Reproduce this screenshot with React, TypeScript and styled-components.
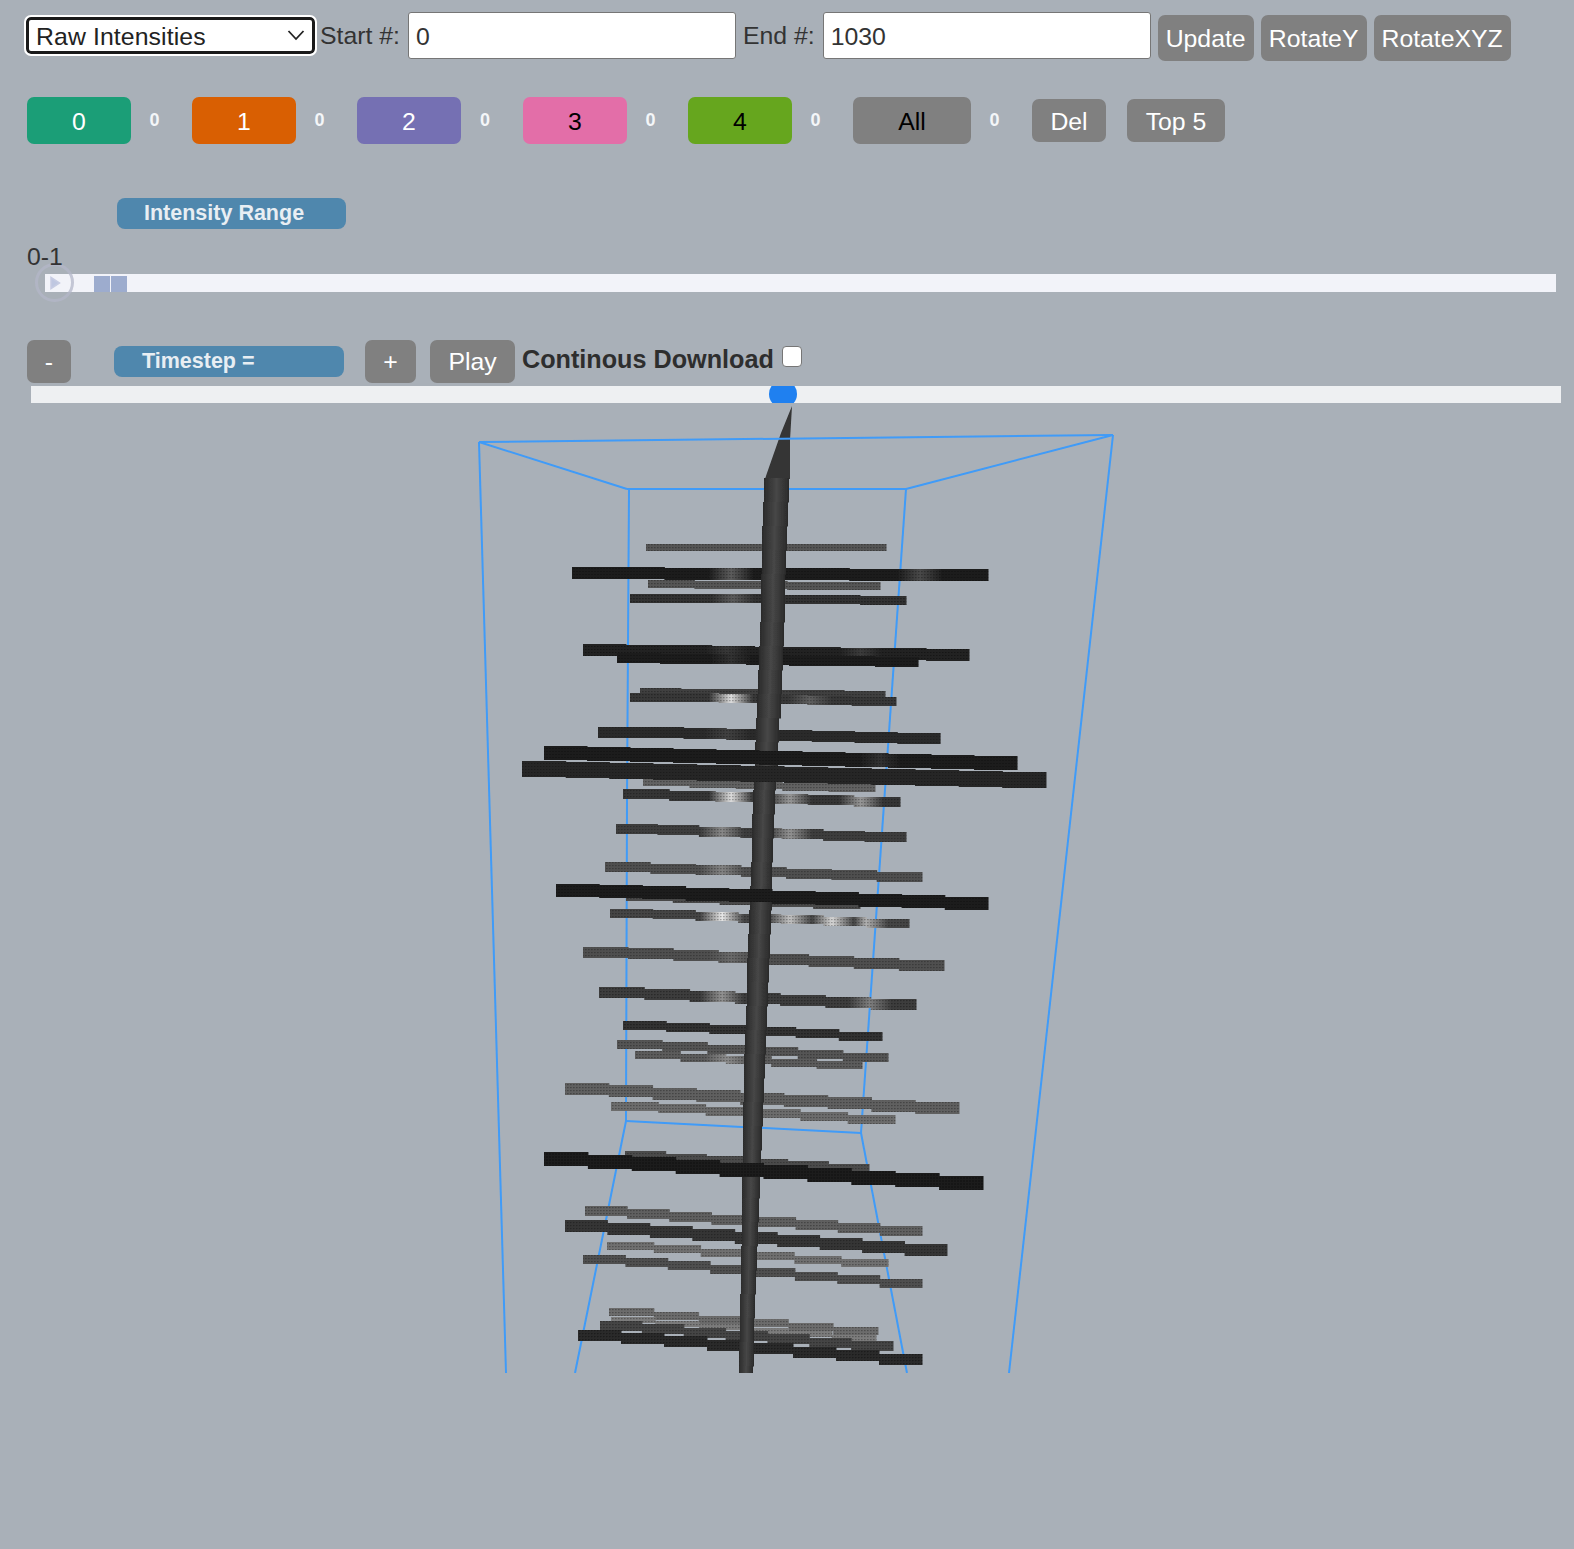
import styled, { createGlobalStyle } from "styled-components";

const GlobalStyle = createGlobalStyle`
  html, body {
    margin: 0;
    padding: 0;
    background: #a9b0b8;
  }
  body {
    font-family: "Liberation Sans", Arial, sans-serif;
    font-size: 24.8px;
    color: #333;
  }
`;

const Page = styled.div`
  width: 1574px;
  height: 1549px;
  overflow: hidden;
  background: #a9b0b8;
`;

const TopRow = styled.div`
  display: flex;
  align-items: flex-start;
  height: 47px;
  padding: 12px 0 0 26px;
`;

const SelectBox = styled.div`
  position: relative;
  width: 289px;
  height: 37px;
  margin-top: 5px;
  flex: none;
`;

const ModeSelect = styled.select`
  display: block;
  width: 100%;
  height: 100%;
  padding: 2px 0 0 7px;
  box-sizing: border-box;
  appearance: none;
  font: 24.8px "Liberation Sans", Arial, sans-serif;
  letter-spacing: 0.1px;
  color: #222;
  background: #fff;
  border: 3px solid #1a1a1a;
  border-radius: 5px;
  outline: 2px solid #fff;
  outline-offset: 0;
`;

const SelectArrow = styled.svg`
  position: absolute;
  right: 10px;
  top: 12px;
  pointer-events: none;
`;

const FieldLabel = styled.label<{ $left: number }>`
  margin-left: ${(p) => p.$left}px;
  line-height: 47px;
  height: 47px;
`;

const NumberInput = styled.input`
  width: 328px;
  height: 47px;
  box-sizing: border-box;
  margin-left: 8px;
  padding: 2px 7px 0;
  font: 24.8px "Liberation Sans", Arial, sans-serif;
  color: #333;
  background: #fff;
  border: 1px solid #767676;
  border-radius: 3px;
`;

const GreyButton = styled.button<{ $w: number; $h: number; $left?: number }>`
  width: ${(p) => p.$w}px;
  height: ${(p) => p.$h}px;
  margin-left: ${(p) => p.$left ?? 0}px;
  padding: 2px 0 0;
  flex: none;
  font: 24.8px "Liberation Sans", Arial, sans-serif;
  color: #fff;
  background: #808080;
  border: none;
  border-radius: 7px;
`;

const TopButton = styled(GreyButton)`
  margin-top: 3px;
`;

const TimeButton = styled(GreyButton)`
  padding-top: 0;
`;

const ClusterRow = styled.div`
  display: flex;
  align-items: center;
  height: 47px;
  margin-top: 38px;
  padding-left: 27px;
`;

const ClusterButton = styled.button<{ $bg: string; $fg: string; $w?: number }>`
  width: ${(p) => p.$w ?? 104}px;
  height: 47px;
  flex: none;
  padding: 2px 0 0;
  font: 24.8px "Liberation Sans", Arial, sans-serif;
  color: ${(p) => p.$fg};
  background: ${(p) => p.$bg};
  border: none;
  border-radius: 7px;
`;

const ClusterCount = styled.span<{ $w?: number }>`
  width: ${(p) => p.$w ?? 61}px;
  flex: none;
  padding-right: 14px;
  box-sizing: border-box;
  text-align: center;
  font-size: 18px;
  font-weight: 700;
  color: #f4f6f8;
`;

const Pill = styled.div<{ $left: number; $w: number; $pad: number }>`
  width: ${(p) => p.$w}px;
  height: 31px;
  margin-left: ${(p) => p.$left}px;
  padding-left: ${(p) => p.$pad}px;
  box-sizing: border-box;
  flex: none;
  line-height: 30px;
  font-size: 21.5px;
  font-weight: 700;
  color: #e8eef3;
  background: #4f87ad;
  border-radius: 8px;
`;

const RangeTitle = styled(Pill)`
  margin-top: 54px;
`;

const RangeLabel = styled.div`
  position: relative;
  z-index: 1;
  height: 30px;
  margin: 15px 0 0 27px;
  line-height: 25px;
`;

const RangeTrack = styled.div`
  position: relative;
  width: 1511px;
  height: 18px;
  margin-left: 45px;
  background: #f2f3f9;
`;

const RangeHandle = styled.div`
  position: absolute;
  left: -10px;
  top: -11px;
  width: 39px;
  height: 39px;
  box-sizing: border-box;
  display: flex;
  align-items: center;
  justify-content: center;
  border: 3px solid #b4b7c9;
  border-radius: 50%;
  opacity: 0.75;
`;

const RangeBlock = styled.div<{ $left: number }>`
  position: absolute;
  left: ${(p) => p.$left}px;
  top: 2px;
  width: 16px;
  height: 16px;
  background: #9dacce;
`;

const TimeRow = styled.div`
  display: flex;
  align-items: flex-start;
  height: 43px;
  margin-top: 48px;
  padding-left: 27px;
`;

const TimePill = styled(Pill)`
  margin-top: 6px;
`;

const TimeText = styled.span`
  margin-left: 7px;
  line-height: 38px;
  font-size: 25.2px;
  font-weight: 700;
  color: #2e2e2e;
`;

const TimeCheck = styled.input`
  width: 20px;
  height: 21px;
  margin: 6px 0 0 8px;
  appearance: none;
  box-sizing: border-box;
  background: #fff;
  border: 1.5px solid #767676;
  border-radius: 4px;
`;

const TimeTrack = styled.div`
  position: relative;
  overflow: hidden;
  width: 1530px;
  height: 17px;
  margin: 3px 0 0 31px;
  background: #eef0f2;
`;

const TimeThumb = styled.div`
  position: absolute;
  left: 738px;
  top: -6px;
  width: 28px;
  height: 28px;
  background: #1f80f0;
  border-radius: 50%;
`;

const VolumeView = styled.svg`
  display: block;
  width: 1574px;
  height: 970px;
`;

type Bar = {
  x1: number;
  y1: number;
  x2: number;
  y2: number;
  t: number;
  shade: number;
  over?: boolean;
  glow?: [number, number][];
};

const bars: Bar[] = [
  { x1: 646, y1: 547, x2: 886, y2: 547, t: 5, shade: 84 },
  { x1: 572, y1: 573, x2: 988, y2: 575, t: 10, shade: 30, glow: [[731, 0.28], [920, 0.2]] },
  { x1: 648, y1: 584, x2: 880, y2: 586, t: 6, shade: 86 },
  { x1: 630, y1: 598, x2: 906, y2: 600, t: 7, shade: 48, glow: [[733, 0.22]] },
  { x1: 583, y1: 650, x2: 969, y2: 655, t: 10, shade: 34, glow: [[727, 0.1], [861, 0.12]] },
  { x1: 617, y1: 658, x2: 918, y2: 662, t: 8, shade: 28, glow: [[731, 0.1]] },
  { x1: 640, y1: 692, x2: 885, y2: 695, t: 6, shade: 64 },
  { x1: 630, y1: 697, x2: 896, y2: 701, t: 7, shade: 56, glow: [[731, 0.85], [810, 0.2]] },
  { x1: 598, y1: 732, x2: 940, y2: 738, t: 9, shade: 44, glow: [[727, 0.1]] },
  { x1: 544, y1: 753, x2: 1017, y2: 763, t: 12, shade: 28, over: true, glow: [[880, 0.1]] },
  { x1: 522, y1: 769, x2: 1046, y2: 780, t: 14, shade: 40, over: true },
  { x1: 643, y1: 782, x2: 875, y2: 788, t: 6, shade: 98 },
  { x1: 623, y1: 794, x2: 900, y2: 802, t: 8, shade: 54, glow: [[731, 0.85], [790, 0.5], [861, 0.5]] },
  { x1: 616, y1: 829, x2: 906, y2: 837, t: 8, shade: 62, glow: [[722, 0.4], [790, 0.45]] },
  { x1: 605, y1: 867, x2: 922, y2: 877, t: 8, shade: 80, glow: [[722, 0.3]] },
  { x1: 626, y1: 897, x2: 860, y2: 905, t: 5, shade: 74 },
  { x1: 556, y1: 890, x2: 988, y2: 903, t: 11, shade: 28, over: true },
  { x1: 610, y1: 913, x2: 909, y2: 923, t: 7, shade: 68, glow: [[722, 0.9], [790, 0.7], [832, 0.8], [866, 0.6]] },
  { x1: 583, y1: 952, x2: 944, y2: 965, t: 9, shade: 80, glow: [[731, 0.15]] },
  { x1: 599, y1: 992, x2: 916, y2: 1004, t: 9, shade: 60, glow: [[722, 0.45], [870, 0.35]] },
  { x1: 623, y1: 1025, x2: 882, y2: 1036, t: 7, shade: 48 },
  { x1: 617, y1: 1044, x2: 888, y2: 1057, t: 7, shade: 84 },
  { x1: 635, y1: 1055, x2: 862, y2: 1065, t: 6, shade: 92, glow: [[727, 0.3]] },
  { x1: 565, y1: 1089, x2: 959, y2: 1108, t: 10, shade: 96 },
  { x1: 611, y1: 1106, x2: 895, y2: 1119, t: 7, shade: 108 },
  { x1: 625, y1: 1155, x2: 869, y2: 1168, t: 6, shade: 76 },
  { x1: 544, y1: 1159, x2: 983, y2: 1183, t: 12, shade: 26, over: true },
  { x1: 585, y1: 1211, x2: 922, y2: 1231, t: 8, shade: 96 },
  { x1: 565, y1: 1226, x2: 947, y2: 1250, t: 10, shade: 54 },
  { x1: 607, y1: 1246, x2: 888, y2: 1263, t: 6, shade: 112 },
  { x1: 583, y1: 1259, x2: 922, y2: 1283, t: 7, shade: 80 },
  { x1: 609, y1: 1312, x2: 878, y2: 1331, t: 6, shade: 108 },
  { x1: 611, y1: 1320, x2: 876, y2: 1338, t: 4, shade: 124 },
  { x1: 600, y1: 1326, x2: 893, y2: 1346, t: 8, shade: 68 },
  { x1: 578, y1: 1335, x2: 922, y2: 1359, t: 9, shade: 42 },
];

const boxLines = [
  "M479 442 L506 1373",
  "M1113 435 L1009 1373",
  "M629 489 L627 800 L626 1121",
  "M906 489 L861 1133",
  "M626 1121 L575 1373",
  "M861 1133 L907 1373",
  "M479 442 L627 489",
  "M1113 435 L906 489",
  "M627 489 L906 489",
  "M626 1121 L861 1133",
];

// spine edges as [y, left, right], read off the reference
const spineEdges = [
  [478, 765, 790],
  [500, 763, 788],
  [600, 761, 785],
  [700, 757, 781],
  [780, 754, 776],
  [1070, 744, 765],
  [1193, 742, 760],
  [1277, 741, 756],
  [1373, 739, 753],
];

const spineAt = (y: number) => {
  let i = 0;
  while (i < spineEdges.length - 2 && spineEdges[i + 1][0] < y) i++;
  const [y0, l0, r0] = spineEdges[i];
  const [y1, l1, r1] = spineEdges[i + 1];
  const k = (y - y0) / (y1 - y0);
  return [l0 + (l1 - l0) * k, r0 + (r1 - r0) * k];
};

// cut into short slices so each one carries the full dark-light-dark shading
const spineSlices = () => {
  const out: { y: number; l: number; r: number }[] = [];
  for (let y = 478; y < 1373; y += 24) {
    const [l, r] = spineAt(y + 12);
    out.push({ y, l: Math.round(l), r: Math.round(r) });
  }
  return out;
};

// a bar is drawn as short level pieces, so that it climbs in steps like the voxels do
const stairs = (b: Bar) => {
  const count = Math.max(2, Math.round((b.x2 - b.x1) / 44));
  const w = (b.x2 - b.x1) / count;
  const t = b.t + 2;
  let d = "";
  for (let i = 0; i < count; i++) {
    const y = Math.round(b.y1 + ((b.y2 - b.y1) * i) / (count - 1) - t / 2);
    d += `M${(b.x1 + i * w).toFixed(1)} ${y}h${(w + 0.5).toFixed(1)}v${t}h${-(w + 0.5).toFixed(1)}z`;
  }
  return d;
};

const grey = (v: number) => `rgb(${v},${v},${v})`;

const BarShape = ({ bar, id }: { bar: Bar; id: string }) => {
  const d = stairs(bar);
  return (
    <g>
      <path d={d} fill={bar.glow ? `url(#${id})` : grey(bar.shade)} />
      <path d={d} fill="url(#voxels)" />
    </g>
  );
};

const BarGradient = ({ bar, id }: { bar: Bar; id: string }) => {
  const span = bar.x2 - bar.x1;
  const at = (x: number) => Math.min(1, Math.max(0, (x - bar.x1) / span));
  return (
    <linearGradient id={id} gradientUnits="userSpaceOnUse" x1={bar.x1} y1="0" x2={bar.x2} y2="0">
      {(bar.glow ?? []).map(([x, s]) => {
        const peak = Math.round(bar.shade + (250 - bar.shade) * s);
        return [
          <stop key={`${x}a`} offset={at(x - 22)} stopColor={grey(bar.shade)} />,
          <stop key={`${x}b`} offset={at(x)} stopColor={grey(peak)} />,
          <stop key={`${x}c`} offset={at(x + 22)} stopColor={grey(bar.shade)} />,
        ];
      })}
    </linearGradient>
  );
};

const Volume = () => (
  <VolumeView viewBox="0 403 1574 970">
    <defs>
      <pattern id="voxels" width="3" height="3" patternUnits="userSpaceOnUse">
        <rect x="0" y="1" width="1.6" height="1.2" fill="#000" opacity="0.28" />
      </pattern>
      <linearGradient id="spineShade" x1="0" y1="0" x2="1" y2="0">
        <stop offset="0" stopColor="#2b2b2b" />
        <stop offset="0.5" stopColor="#474747" />
        <stop offset="1" stopColor="#2a2a2a" />
      </linearGradient>
      <filter id="soft" x="-5%" y="-5%" width="110%" height="110%">
        <feGaussianBlur stdDeviation="0.45" />
      </filter>
      {bars.map((b, i) => (b.glow ? <BarGradient key={i} bar={b} id={`bar${i}`} /> : null))}
    </defs>
    <g filter="url(#soft)">
      <g fill="none" stroke="#3f9bf8" strokeWidth="2">
        {boxLines.map((d) => (
          <path key={d} d={d} />
        ))}
      </g>
      {bars.map((b, i) => (!b.over ? <BarShape key={i} bar={b} id={`bar${i}`} /> : null))}
      <path d="M792 406 L790 440 L790 479 L765 479 L767 473 L781 433 Z" fill="#343434" />
      {spineSlices().map((s) => (
        <rect key={s.y} x={s.l} y={s.y} width={s.r - s.l} height={24.5} fill="url(#spineShade)" />
      ))}
      <path d="M479 442 L1113 435" fill="none" stroke="#3f9bf8" strokeWidth="2" />
      {bars.map((b, i) => (b.over ? <BarShape key={i} bar={b} id={`bar${i}`} /> : null))}
    </g>
  </VolumeView>
);

const clusters = [
  { name: "0", bg: "#1b9e77", fg: "#fff", gap: 61 },
  { name: "1", bg: "#d95f02", fg: "#fff", gap: 61 },
  { name: "2", bg: "#7570b3", fg: "#fff", gap: 62 },
  { name: "3", bg: "#e36ea8", fg: "#000", gap: 61 },
  { name: "4", bg: "#66a61e", fg: "#000", gap: 61 },
];

const App = () => (
  <Page>
    <GlobalStyle />
    <TopRow>
      <SelectBox>
        <ModeSelect defaultValue="raw">
          <option value="raw">Raw Intensities</option>
        </ModeSelect>
        <SelectArrow width="18" height="12" viewBox="0 0 18 12">
          <path d="M1.5 2 L9 10 L16.5 2" fill="none" stroke="#222" strokeWidth="1.8" />
        </SelectArrow>
      </SelectBox>
      <FieldLabel $left={5}>Start #:</FieldLabel>
      <NumberInput defaultValue="0" />
      <FieldLabel $left={7}>End #:</FieldLabel>
      <NumberInput defaultValue="1030" />
      <TopButton $w={96} $h={46} $left={7}>Update</TopButton>
      <TopButton $w={106} $h={46} $left={7}>RotateY</TopButton>
      <TopButton $w={137} $h={46} $left={7}>RotateXYZ</TopButton>
    </TopRow>

    <ClusterRow>
      {clusters.map((c) => [
        <ClusterButton key={c.name} $bg={c.bg} $fg={c.fg}>{c.name}</ClusterButton>,
        <ClusterCount key={`${c.name}n`} $w={c.gap}>0</ClusterCount>,
      ])}
      <ClusterButton $bg="#808080" $fg="#000" $w={118}>All</ClusterButton>
      <ClusterCount>0</ClusterCount>
      <GreyButton $w={74} $h={43}>Del</GreyButton>
      <GreyButton $w={98} $h={43} $left={21}>Top 5</GreyButton>
    </ClusterRow>

    <RangeTitle $left={117} $w={229} $pad={27}>Intensity Range</RangeTitle>
    <RangeLabel>0-1</RangeLabel>
    <RangeTrack>
      <RangeHandle>
        <svg width="12" height="14" viewBox="0 0 12 14">
          <path d="M2 1.5 L10.5 7 L2 12.5 Z" fill="#aeb9da" stroke="#b9bfdc" strokeWidth="1.5" />
        </svg>
      </RangeHandle>
      <RangeBlock $left={49} />
      <RangeBlock $left={66} />
    </RangeTrack>

    <TimeRow>
      <TimeButton $w={44} $h={43}>-</TimeButton>
      <TimePill $left={43} $w={230} $pad={28}>Timestep =</TimePill>
      <TimeButton $w={51} $h={43} $left={21}>+</TimeButton>
      <TimeButton $w={85} $h={43} $left={14}>Play</TimeButton>
      <TimeText>Continous Download</TimeText>
      <TimeCheck type="checkbox" />
    </TimeRow>
    <TimeTrack>
      <TimeThumb />
    </TimeTrack>

    <Volume />
  </Page>
);

export default App;
